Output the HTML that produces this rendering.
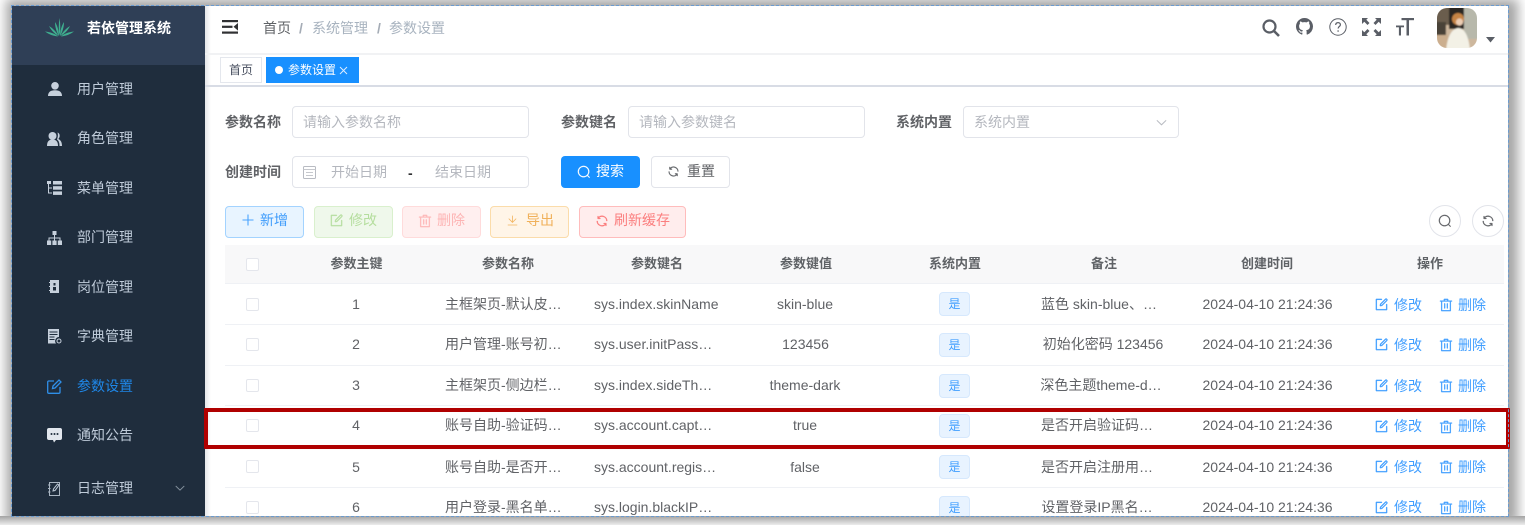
<!DOCTYPE html>
<html lang="zh"><head><meta charset="utf-8"><title>参数设置</title>
<style>
*{box-sizing:border-box}
html,body{margin:0;padding:0;width:1525px;height:525px;overflow:hidden;background:#fff}
body{font-family:"Liberation Sans","Noto Sans CJK SC",sans-serif;font-size:14px;color:#606266;position:relative}
#wrap{position:absolute;left:0;top:0;width:1525px;height:525px;overflow:hidden;filter:blur(.35px)}
#shade{position:absolute;left:0;top:0;width:1525px;height:525px;background:#fff}
#app{position:absolute;left:12px;top:6px;width:1496px;height:510px;background:#fff;overflow:hidden;box-shadow:2px 1px 11px 8px #a6a6a6}
#dash{position:absolute;left:11px;top:5px;width:1498px;height:512px;border:1px dashed #6a9bd0;pointer-events:none}
.a{position:absolute}
.t{position:absolute;white-space:nowrap;line-height:20px}
.c{transform:translateX(-50%)}
svg{position:absolute;display:block}
.box{position:absolute;border:1px solid #e2e4ea;border-radius:4px;background:#fff}
.btn{position:absolute;height:32px;top:206px;border-radius:4px;border:1px solid;font-size:14px}
.cb{position:absolute;left:246px;width:13px;height:13px;border:1px solid #e4e6ec;border-radius:2px;background:#fff}
.ln{position:absolute;left:225px;width:1279px;height:1px;background:#eff1f5}
.tag{position:absolute;left:939px;width:31px;height:24px;background:#e8f3ff;border:1px solid #d6e8fd;border-radius:4px;color:#409eff;font-size:12px;line-height:22px;text-align:center}
.lb{font-weight:700;color:#606266}
.ph{color:#b4b7be}
.m{color:#bfcbd9}
.h{font-weight:700;color:#5f6266;font-size:13px}
.bl{color:#409eff}
symbol path{stroke:currentColor;stroke-width:22}
</style></head><body>
<svg width="0" height="0" style="position:absolute"><defs>
<symbol id="edit" viewBox="0 0 1024 1024"><path fill="currentColor" d="M832 512a32 32 0 1 1 64 0v352a32 32 0 0 1-32 32H160a32 32 0 0 1-32-32V160a32 32 0 0 1 32-32h352a32 32 0 0 1 0 64H192v640h640z"/><path fill="currentColor" d="m469.952 554.24 52.8-7.552L847.104 222.4a32 32 0 1 0-45.248-45.248L477.44 501.44l-7.552 52.8zm422.4-422.4a96 96 0 0 1 0 135.808l-331.84 331.84a32 32 0 0 1-18.112 9.088L436.8 623.68a32 32 0 0 1-36.224-36.224l15.104-105.6a32 32 0 0 1 9.024-18.112l331.904-331.84a96 96 0 0 1 135.744 0z"/></symbol>
<symbol id="del" viewBox="0 0 1024 1024"><path fill="currentColor" d="M160 256H96a32 32 0 0 1 0-64h256V95.936a32 32 0 0 1 32-32h256a32 32 0 0 1 32 32V192h256a32 32 0 1 1 0 64h-64v672a32 32 0 0 1-32 32H192a32 32 0 0 1-32-32zm448-64v-64H416v64zM224 896h576V256H224zm192-128a32 32 0 0 1-32-32V416a32 32 0 0 1 64 0v320a32 32 0 0 1-32 32m192 0a32 32 0 0 1-32-32V416a32 32 0 0 1 64 0v320a32 32 0 0 1-32 32"/></symbol>
<symbol id="search" viewBox="0 0 1024 1024"><path fill="currentColor" d="m795.904 750.72 124.992 124.928a32 32 0 0 1-45.248 45.248L750.656 795.904a416 416 0 1 1 45.248-45.248zM480 832a352 352 0 1 0 0-704 352 352 0 0 0 0 704"/></symbol>
<symbol id="refresh" viewBox="0 0 1024 1024"><path fill="currentColor" d="M771.776 794.88A384 384 0 0 1 128 512h64a320 320 0 0 0 555.712 216.448H654.72a32 32 0 1 1 0-64h149.056a32 32 0 0 1 32 32v148.928a32 32 0 1 1-64 0v-50.56zM276.288 295.616h92.992a32 32 0 0 1 0 64H220.16a32 32 0 0 1-32-32V178.56a32 32 0 0 1 64 0v50.56A384 384 0 0 1 896.128 512h-64a320 320 0 0 0-555.776-216.384z"/></symbol>
<symbol id="arrow" viewBox="0 0 1024 1024"><path fill="currentColor" d="M831.872 340.864 512 652.672 192.128 340.864a30.592 30.592 0 0 0-42.752 0 29.12 29.12 0 0 0 0 41.6L489.664 714.24a32 32 0 0 0 44.672 0l340.288-331.712a29.12 29.12 0 0 0 0-41.728 30.592 30.592 0 0 0-42.752 0z"/></symbol>
<filter id="soft"><feGaussianBlur stdDeviation="0.9"/></filter>
</defs></svg>
<div id="wrap">
<div id="shade"></div>
<div id="app"></div>

<!-- sidebar -->
<div class="a" style="left:12px;top:6px;width:193px;height:510px;background:#1f2d3d"></div>
<div class="a" style="left:12px;top:6px;width:193px;height:59px;background:#2f3f56"></div>
<div class="a" style="left:205px;top:6px;width:6px;height:510px;background:linear-gradient(90deg,#e4e6e9,#fff)"></div>
<svg style="left:45px;top:18px" width="29" height="19" viewBox="0 0 29 19"><g fill="#3fae8f"><path d="M14.500 18C13.400 12 13.600 6 14.500 0c1 6 1.100 12 0 18z"/><path d="M14 18C11.500 14 10 9 10 4c2.500 4 4 9 4 14z"/><path d="M15 18c2.500-4 4-9 4-14-2.500 4-4 9-4 14z"/><path d="M13.500 18C9 15.500 6 12 4 8c4 2.500 7.500 6 9.500 10z"/><path d="M15.500 18c4.500-2.500 7.500-6 9.500-10-4 2.500-7.500 6-9.500 10z"/><path d="M13 18.500C8.500 18 4 16.500 0 13.500c5 .5 10 2 13 5z"/><path d="M16 18.500c4.500-.5 9-2 13-5-5 .5-10 2-13 5z"/></g></svg>
<div class="t" style="left:87px;top:18px;color:#fff;font-weight:700;font-size:14px">若依管理系统</div>

<svg style="left:48px;top:82px" width="14" height="14" viewBox="0 0 14 14"><circle cx="7" cy="3.800" r="3.800" fill="#c6d0dc"/><path d="M0 14c0-4 2.500-5.800 7-5.800s7 1.800 7 5.800z" fill="#c6d0dc"/></svg>
<div class="t m" style="left:77px;top:79px">用户管理</div>
<svg style="left:47px;top:132px" width="15" height="14" viewBox="0 0 15 14"><circle cx="5.500" cy="4" r="4" fill="#c6d0dc"/><path d="M0 14c0-4 1.500-6.500 5.500-6.500S11 10 11 14z" fill="#c6d0dc"/><path d="M10.500 .5c2.500.5 3 4.500.8 6.500 2.300 1 3.700 3 3.700 7h-2.500c0-3-.5-5-2.500-6.500 1-2.500 1.200-5 .5-7z" fill="#c6d0dc"/></svg>
<div class="t m" style="left:77px;top:128px">角色管理</div>
<svg style="left:47px;top:181px" width="15" height="14" viewBox="0 0 15 14"><g fill="#c6d0dc"><rect x="0" y="0" width="4" height="3"/><rect x="6" y="0" width="9" height="3.500"/><rect x="6" y="5.200" width="9" height="3.500"/><rect x="6" y="10.400" width="9" height="3.500"/><rect x="1" y="3" width="1" height="9"/><rect x="1" y="6.500" width="4" height="1"/><rect x="1" y="11.500" width="4" height="1"/></g></svg>
<div class="t m" style="left:77px;top:178px">菜单管理</div>
<svg style="left:47px;top:231px" width="15" height="14" viewBox="0 0 15 14"><g fill="#c6d0dc"><rect x="5.500" y="0" width="4" height="4"/><rect x="0" y="9.500" width="4.200" height="4.500"/><rect x="5.400" y="9.500" width="4.200" height="4.500"/><rect x="10.800" y="9.500" width="4.200" height="4.500"/><rect x="7" y="4" width="1" height="6"/><rect x="1.500" y="6.500" width="12" height="1"/><rect x="1.500" y="6.500" width="1" height="4"/><rect x="12.500" y="6.500" width="1" height="4"/></g></svg>
<div class="t m" style="left:77px;top:227px">部门管理</div>
<svg style="left:49px;top:280px" width="11" height="13" viewBox="0 0 11 13"><path fill="#c6d0dc" d="M1 0h9v13H1v-2H0v-1h1V7H0V6h1V3H0V2h1z"/><rect x="4.500" y="3" width="2" height="2.500" fill="#1f2d3d"/><rect x="4" y="7" width="3" height="3.500" fill="#1f2d3d"/></svg>
<div class="t m" style="left:77px;top:277px">岗位管理</div>
<svg style="left:47px;top:329px" width="15" height="15" viewBox="0 0 15 15"><path fill="#c6d0dc" d="M1 0h11v8a4 4 0 0 0-3 6.500H1z"/><rect x="2.500" y="2.500" width="8" height="1" fill="#1f2d3d"/><rect x="2.500" y="5" width="8" height="1" fill="#1f2d3d"/><rect x="2.500" y="7.500" width="5" height="1" fill="#1f2d3d"/><rect x="2.500" y="10" width="5" height="1" fill="#1f2d3d"/><circle cx="12" cy="12" r="2" fill="none" stroke="#c6d0dc"/></svg>
<div class="t m" style="left:77px;top:326px">字典管理</div>
<svg style="left:47px;top:379px" width="15" height="15" viewBox="0 0 15 15"><path fill="none" stroke="#2f8fe8" stroke-width="1.300" d="M7 2H1.700a1 1 0 0 0-1 1v10.300a1 1 0 0 0 1 1H12a1 1 0 0 0 1-1V8"/><path fill="none" stroke="#2f8fe8" stroke-width="1.300" d="M5.500 9.500l.5-2.500 6-6 2 2-6 6z"/></svg>
<div class="t" style="left:77px;top:376px;color:#1f87e8">参数设置</div>
<svg style="left:47px;top:428px" width="15" height="15" viewBox="0 0 15 15"><path fill="#e2e7ee" d="M2 0h11a2 2 0 0 1 2 2v8a2 2 0 0 1-2 2H9l-2 2.500-1-2.500H2a2 2 0 0 1-2-2V2a2 2 0 0 1 2-2z"/><circle cx="4.500" cy="6" r="1" fill="#1f2d3d"/><circle cx="7.500" cy="6" r="1" fill="#1f2d3d"/><circle cx="10.500" cy="6" r="1" fill="#1f2d3d"/></svg>
<div class="t m" style="left:77px;top:425px">通知公告</div>
<svg style="left:48px;top:481px" width="13" height="15" viewBox="0 0 13 15"><path fill="none" stroke="#a9b5c2" d="M1.500 1.500h10v13h-10zM0 4h2.500M0 7.500h2.500M0 11h2.500"/><path fill="none" stroke="#bfcbd9" d="M5 10l.5-2 4-5 1.500 1-4 5.500z"/></svg>
<div class="t m" style="left:77px;top:478px">日志管理</div>
<svg style="left:174px;top:482px;color:#8d99a6" width="12" height="12"><use href="#arrow"/></svg>

<!-- navbar -->
<svg style="left:222px;top:20px" width="16" height="14" viewBox="0 0 16 14"><g fill="#303133"><rect x="0" y="0" width="16" height="2.200"/><rect x="0" y="5.700" width="10.500" height="2.200"/><rect x="0" y="11.500" width="16" height="2.200"/><path d="M16 3v7.600l-4.500-3.800z"/></g></svg>
<div class="t" style="left:263px;top:18px;color:#5f6266">首页</div>
<div class="t" style="left:299px;top:18px;color:#a5acb6;font-weight:700">/</div>
<div class="t" style="left:312px;top:18px;color:#a8b3bf">系统管理</div>
<div class="t" style="left:377px;top:18px;color:#a5acb6;font-weight:700">/</div>
<div class="t" style="left:389px;top:18px;color:#a8b3bf">参数设置</div>
<div class="a" style="left:205px;top:53px;width:1303px;height:2px;background:#f1f2f4"></div>

<svg style="left:1262px;top:19px" width="18" height="18" viewBox="0 0 18 18"><circle cx="7.500" cy="7.500" r="6" fill="none" stroke="#5a5e66" stroke-width="2.200"/><path d="M12 12l5 5" stroke="#5a5e66" stroke-width="2.600"/></svg>
<svg style="left:1296px;top:18px" width="17" height="17" viewBox="0 0 16 16"><path fill="#5a5e66" d="M8 0C3.580 0 0 3.580 0 8c0 3.540 2.290 6.530 5.470 7.590.4.070.55-.17.55-.38 0-.19-.01-.82-.01-1.490-2.010.37-2.530-.49-2.690-.94-.09-.23-.48-.94-.82-1.130-.28-.15-.68-.52-.01-.53.63-.01 1.080.58 1.230.82.72 1.210 1.870.87 2.330.66.070-.52.28-.87.51-1.070-1.780-.2-3.640-.89-3.640-3.950 0-.87.31-1.590.82-2.150-.08-.2-.36-1.020.08-2.120 0 0 .67-.21 2.200.82.64-.18 1.320-.27 2-.27s1.360.09 2 .27c1.530-1.040 2.200-.82 2.200-.82.44 1.100.16 1.920.08 2.120.51.56.82 1.270.82 2.150 0 3.070-1.870 3.750-3.650 3.950.29.25.54.73.54 1.480 0 1.070-.01 1.930-.01 2.200 0 .21.15.46.55.38A8.013 8.013 0 0016 8c0-4.420-3.580-8-8-8z"/></svg>
<svg style="left:1329px;top:18px" width="18" height="18" viewBox="0 0 18 18"><circle cx="9" cy="9" r="8.200" fill="none" stroke="#5a5e66" stroke-width="1"/><path d="M6.700 7c0-1.500 1-2.400 2.400-2.400s2.300.9 2.300 2.100c0 1.800-2.300 1.800-2.300 3.800" fill="none" stroke="#5a5e66" stroke-width="1.200"/><circle cx="9.100" cy="13" r=".8" fill="#5a5e66"/></svg>
<svg style="left:1362px;top:18px" width="19" height="18" viewBox="0 0 19 18"><g fill="#5a5e66"><path d="M0 0h6L4.300 1.800 7.500 5 5.500 7 2.300 3.800 0 6z"/><path d="M19 0h-6l1.700 1.800L11.500 5l2 2 3.200-3.200L19 6z"/><path d="M0 18h6l-1.700-1.800 3.200-3.200-2-2-3.200 3.200L0 12z"/><path d="M19 18h-6l1.700-1.800-3.200-3.200 2-2 3.200 3.200L19 12z"/></g></svg>
<svg style="left:1396px;top:18px" width="18" height="18" viewBox="0 0 18 18"><g fill="#5a5e66"><rect x="5.500" y="0" width="12.500" height="2.200"/><rect x="10.500" y="0" width="2.500" height="17.500"/><rect x="0" y="7.500" width="8" height="1.800"/><rect x="2.900" y="7.500" width="2.100" height="10"/></g></svg>
<div class="a" style="left:1437px;top:8px;width:40px;height:40px;border-radius:10px;overflow:hidden"><svg style="left:0;top:0" width="40" height="40" viewBox="0 0 40 40"><g filter="url(#soft)"><rect x="-3" y="-3" width="46" height="46" fill="#cdb79d"/><rect x="-3" y="-3" width="16" height="20" fill="#6b5d4e"/><rect x="12" y="-3" width="15" height="24" fill="#2a2521"/><rect x="27" y="-3" width="16" height="34" fill="#b7b8ab"/><rect x="-3" y="14" width="12" height="13" fill="#4a4238"/><rect x="-3" y="27" width="14" height="16" fill="#cbae8e"/><path d="M9 43c1-13 5-22 12-23 7 0 11 9 12 23z" fill="#f3f1e6"/><circle cx="21" cy="11" r="6" fill="#c68445"/><circle cx="22.500" cy="14" r="3.600" fill="#eccdb4"/></g></svg></div>
<svg style="left:1486px;top:37px" width="9" height="6" viewBox="0 0 9 6"><path d="M0 0h9L4.500 5.500z" fill="#5a5e66"/></svg>

<!-- tags -->
<div class="a" style="left:205px;top:85px;width:1303px;height:2px;background:#d8dce5"></div>
<div class="a" style="left:220px;top:57px;width:42px;height:26px;border:1px solid #e4e7ed;background:#fff;color:#495060;font-size:12px;line-height:24px;text-align:center">首页</div>
<div class="a" style="left:266px;top:57px;width:93px;height:26px;background:#1890ff;border:1px solid #1890ff"></div>
<div class="a" style="left:275px;top:66px;width:8px;height:8px;background:#fff;border-radius:50%"></div>
<div class="t" style="left:288px;top:60px;color:#fff;font-size:12px">参数设置</div>
<svg style="left:339px;top:66px" width="9" height="9"><path d="M1 1l7 7M8 1L1 8" stroke="#dcecff" stroke-width="1"/></svg>

<!-- form -->
<div class="t lb" style="left:225px;top:112px">参数名称</div>
<div class="box" style="left:292px;top:106px;width:237px;height:32px"></div>
<div class="t ph" style="left:303px;top:112px">请输入参数名称</div>
<div class="t lb" style="left:561px;top:112px">参数键名</div>
<div class="box" style="left:628px;top:106px;width:237px;height:32px"></div>
<div class="t ph" style="left:639px;top:112px">请输入参数键名</div>
<div class="t lb" style="left:896px;top:112px">系统内置</div>
<div class="box" style="left:963px;top:106px;width:216px;height:32px"></div>
<div class="t ph" style="left:974px;top:112px">系统内置</div>
<svg style="left:1155px;top:116px;color:#b4b7be" width="13" height="13"><use href="#arrow"/></svg>
<div class="t lb" style="left:225px;top:162px">创建时间</div>
<div class="box" style="left:292px;top:156px;width:237px;height:32px"></div>
<svg style="left:303px;top:165px" width="13" height="14" viewBox="0 0 13 14"><rect x=".5" y="1.500" width="12" height="12" rx="1" fill="none" stroke="#b8bbc2"/><path d="M.5 4.500h12M3 7.500h7M3 10.500h7" stroke="#c6c8cd"/></svg>
<div class="t ph" style="left:331px;top:162px">开始日期</div>
<div class="t" style="left:408px;top:163px;color:#303133;font-weight:700">-</div>
<div class="t ph" style="left:435px;top:162px">结束日期</div>

<div class="a" style="left:561px;top:156px;width:79px;height:32px;background:#1890ff;border-radius:4px"></div>
<svg style="left:577px;top:165px;color:#fff" width="14" height="14"><use href="#search"/></svg>
<div class="t" style="left:596px;top:161px;color:#fff">搜索</div>
<div class="box" style="left:651px;top:156px;width:79px;height:32px"></div>
<svg style="left:667px;top:165px;color:#606266" width="13" height="13"><use href="#refresh"/></svg>
<div class="t" style="left:687px;top:161px;color:#606266">重置</div>

<!-- toolbar -->
<div class="btn" style="left:225px;width:79px;background:#e8f4ff;border-color:#a3d3ff"></div>
<svg style="left:242px;top:214px" width="12" height="12"><path d="M6 .5v11M.5 6h11" stroke="#4aa3ff" stroke-width="1.100"/></svg>
<div class="t" style="left:260px;top:210px;color:#3f9cfb">新增</div>
<div class="btn" style="left:314px;width:79px;background:#eff8eb;border-color:#d9f0cd"></div>
<svg style="left:329px;top:213px;color:#b7dfa2" width="15" height="15"><use href="#edit"/></svg>
<div class="t" style="left:349px;top:210px;color:#b5de9e">修改</div>
<div class="btn" style="left:402px;width:79px;background:#ffefef;border-color:#ffdbdb"></div>
<svg style="left:418px;top:214px;color:#fdb8b8" width="14" height="14"><use href="#del"/></svg>
<div class="t" style="left:437px;top:210px;color:#fdb4b4">删除</div>
<div class="btn" style="left:490px;width:79px;background:#fff5e8;border-color:#fbdcaa"></div>
<svg style="left:506px;top:214px" width="13" height="13" viewBox="0 0 1024 1024"><path fill="#f3b560" d="M160 832h704a32 32 0 1 1 0 64H160a32 32 0 1 1 0-64m384-253.696 236.288-236.352 45.248 45.248L508.800 704 192 387.200l45.248-45.248L480 584.704V128h64z"/></svg>
<div class="t" style="left:526px;top:210px;color:#f0b15a">导出</div>
<div class="btn" style="left:579px;width:107px;background:#ffeded;border-color:#ffbcbc"></div>
<svg style="left:595px;top:214px;color:#fb7878" width="14" height="14"><use href="#refresh"/></svg>
<div class="t" style="left:614px;top:210px;color:#fb7f7f">刷新缓存</div>

<div class="a" style="left:1429px;top:205px;width:32px;height:32px;border:1px solid #e2e4ea;border-radius:50%"></div>
<svg style="left:1438px;top:214px;color:#606266" width="14" height="14"><use href="#search"/></svg>
<div class="a" style="left:1472px;top:205px;width:32px;height:32px;border:1px solid #e2e4ea;border-radius:50%"></div>
<svg style="left:1481px;top:214px;color:#606266" width="14" height="14"><use href="#refresh"/></svg>

<!-- table head -->
<div class="a" style="left:225px;top:245px;width:1279px;height:38px;background:#f8f8f9"></div>
<div class="ln" style="top:283px"></div>
<div class="cb" style="top:258px"></div>
<div class="t h c" style="left:356.500px;top:254px">参数主键</div>
<div class="t h c" style="left:508px;top:254px">参数名称</div>
<div class="t h c" style="left:657px;top:254px">参数键名</div>
<div class="t h c" style="left:806px;top:254px">参数键值</div>
<div class="t h c" style="left:955px;top:254px">系统内置</div>
<div class="t h c" style="left:1104px;top:254px">备注</div>
<div class="t h c" style="left:1267px;top:254px">创建时间</div>
<div class="t h c" style="left:1430px;top:254px">操作</div>

<!-- row 1 -->
<div class="ln" style="top:324px"></div>
<div class="cb" style="top:298px"></div>
<div class="t c" style="left:356px;top:294px">1</div>
<div class="t" style="left:445px;top:294px">主框架页-默认皮…</div>
<div class="t" style="left:594px;top:294px">sys.index.skinName</div>
<div class="t c" style="left:805px;top:294px">skin-blue</div>
<div class="tag" style="top:292px">是</div>
<div class="t c" style="left:1099px;top:294px">蓝色 skin-blue、…</div>
<div class="t c" style="left:1267.500px;top:294px">2024-04-10 21:24:36</div>
<svg class="bl" style="left:1373.500px;top:297px" width="15" height="15"><use href="#edit"/></svg>
<div class="t bl" style="left:1394px;top:295px">修改</div>
<svg class="bl" style="left:1439px;top:298px" width="14" height="14"><use href="#del"/></svg>
<div class="t bl" style="left:1458px;top:295px">删除</div>

<!-- row 2 -->
<div class="ln" style="top:365px"></div>
<div class="cb" style="top:338px"></div>
<div class="t c" style="left:356px;top:334px">2</div>
<div class="t" style="left:445px;top:334px">用户管理-账号初…</div>
<div class="t" style="left:594px;top:334px">sys.user.initPass…</div>
<div class="t c" style="left:805.500px;top:334px">123456</div>
<div class="tag" style="top:333px">是</div>
<div class="t c" style="left:1103px;top:334px">初始化密码 123456</div>
<div class="t c" style="left:1267.500px;top:334px">2024-04-10 21:24:36</div>
<svg class="bl" style="left:1373.500px;top:337px" width="15" height="15"><use href="#edit"/></svg>
<div class="t bl" style="left:1394px;top:335px">修改</div>
<svg class="bl" style="left:1439px;top:338px" width="14" height="14"><use href="#del"/></svg>
<div class="t bl" style="left:1458px;top:335px">删除</div>

<!-- row 3 -->
<div class="ln" style="top:405px"></div>
<div class="cb" style="top:379px"></div>
<div class="t c" style="left:356px;top:375px">3</div>
<div class="t" style="left:445px;top:375px">主框架页-侧边栏…</div>
<div class="t" style="left:594px;top:375px">sys.index.sideTh…</div>
<div class="t c" style="left:805px;top:375px">theme-dark</div>
<div class="tag" style="top:374px">是</div>
<div class="t c" style="left:1101px;top:375px">深色主题theme-d…</div>
<div class="t c" style="left:1267.500px;top:375px">2024-04-10 21:24:36</div>
<svg class="bl" style="left:1373.500px;top:378px" width="15" height="15"><use href="#edit"/></svg>
<div class="t bl" style="left:1394px;top:376px">修改</div>
<svg class="bl" style="left:1439px;top:379px" width="14" height="14"><use href="#del"/></svg>
<div class="t bl" style="left:1458px;top:376px">删除</div>

<!-- row 4 -->
<div class="cb" style="top:419px"></div>
<div class="t c" style="left:356px;top:415px">4</div>
<div class="t" style="left:445px;top:415px">账号自助-验证码…</div>
<div class="t" style="left:594px;top:415px">sys.account.capt…</div>
<div class="t c" style="left:805px;top:415px">true</div>
<div class="tag" style="top:414px">是</div>
<div class="t c" style="left:1097px;top:415px">是否开启验证码…</div>
<div class="t c" style="left:1267.500px;top:415px">2024-04-10 21:24:36</div>
<svg class="bl" style="left:1373.500px;top:419px" width="15" height="15"><use href="#edit"/></svg>
<div class="t bl" style="left:1394px;top:416px">修改</div>
<svg class="bl" style="left:1439px;top:420px" width="14" height="14"><use href="#del"/></svg>
<div class="t bl" style="left:1458px;top:416px">删除</div>

<!-- row 5 -->
<div class="ln" style="top:487px"></div>
<div class="cb" style="top:460px"></div>
<div class="t c" style="left:356px;top:457px">5</div>
<div class="t" style="left:445px;top:457px">账号自助-是否开…</div>
<div class="t" style="left:594px;top:457px">sys.account.regis…</div>
<div class="t c" style="left:805px;top:457px">false</div>
<div class="tag" style="top:455px">是</div>
<div class="t c" style="left:1097px;top:457px">是否开启注册用…</div>
<div class="t c" style="left:1267.500px;top:457px">2024-04-10 21:24:36</div>
<svg class="bl" style="left:1373.500px;top:459px" width="15" height="15"><use href="#edit"/></svg>
<div class="t bl" style="left:1394px;top:457px">修改</div>
<svg class="bl" style="left:1439px;top:460px" width="14" height="14"><use href="#del"/></svg>
<div class="t bl" style="left:1458px;top:457px">删除</div>

<!-- row 6 -->
<div class="cb" style="top:501px"></div>
<div class="t c" style="left:356px;top:497px">6</div>
<div class="t" style="left:445px;top:497px">用户登录-黑名单…</div>
<div class="t" style="left:594px;top:497px">sys.login.blackIP…</div>
<div class="tag" style="top:496px">是</div>
<div class="t c" style="left:1097px;top:497px">设置登录IP黑名…</div>
<div class="t c" style="left:1267.500px;top:497px">2024-04-10 21:24:36</div>
<svg class="bl" style="left:1373.500px;top:500px" width="15" height="15"><use href="#edit"/></svg>
<div class="t bl" style="left:1394px;top:497px">修改</div>
<svg class="bl" style="left:1439px;top:501px" width="14" height="14"><use href="#del"/></svg>
<div class="t bl" style="left:1458px;top:497px">删除</div>

<!-- highlight -->
<div class="a" style="left:204px;top:408px;width:1306px;height:41px;border:4px solid #b00000;border-radius:1px"></div>

<!-- cover bottom overflow -->
<div class="a" style="left:0;top:516px;width:1525px;height:9px;background:linear-gradient(180deg,#a3a3a3,#ececec)"></div>
<div id="dash"></div>
</div>
</body></html>
